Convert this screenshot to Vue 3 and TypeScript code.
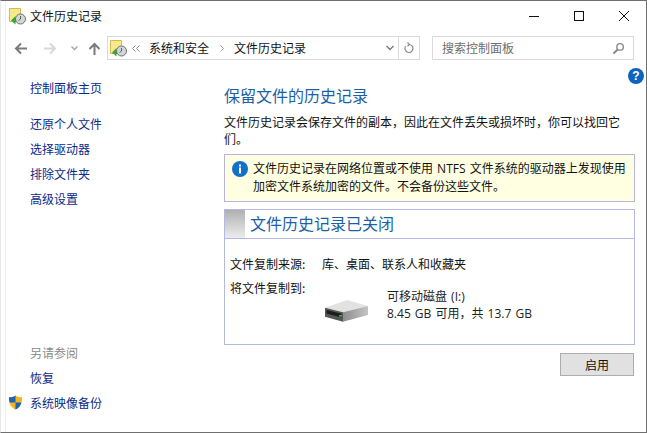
<script setup lang="ts">
const links = ["还原个人文件", "选择驱动器", "排除文件夹", "高级设置"];
</script>

<template>
  <div class="window">
    <header class="titlebar">
      <svg class="app-icon" viewBox="0 0 17 17">
        <path d="M0.5 0.5 H11.5 V13.5 H0.5 Z" fill="#fae98c" stroke="#d8b94c" />
        <path d="M2 12.5 L6.5 8 V10.5 H9 V14 H6.5 V16.5 Z" fill="#3aa535" />
        <circle cx="11.5" cy="11" r="5" fill="#d3d6d6" stroke="#6c7272" />
        <path d="M11.5 8 V11 L9.5 12.5" fill="none" stroke="#444" stroke-width="0.8" />
      </svg>
      <span class="title">文件历史记录</span>
      <div class="controls">
        <svg viewBox="0 0 10 10"><path d="M0 5.5 H10" stroke="#111" fill="none" /></svg>
        <svg viewBox="0 0 10 10"><rect x="0.5" y="0.5" width="9" height="9" stroke="#111" fill="none" /></svg>
        <svg viewBox="0 0 10 10"><path d="M0 0 L10 10 M10 0 L0 10" stroke="#111" fill="none" /></svg>
      </div>
    </header>

    <nav class="toolbar">
      <div class="arrows">
        <svg viewBox="0 0 13 13"><path d="M13 6.5 H2 M7 1.5 L2 6.5 L7 11.5" stroke="#7a7a7a" stroke-width="2" fill="none" /></svg>
        <svg class="fwd" viewBox="0 0 13 13"><path d="M0 6.5 H11 M6 1.5 L11 6.5 L6 11.5" stroke="#d8d8d8" stroke-width="2" fill="none" /></svg>
        <svg class="chev" viewBox="0 0 7 5"><path d="M0.5 0.5 L3.5 3.5 L6.5 0.5" stroke="#a5a5a5" stroke-width="1.4" fill="none" /></svg>
        <svg class="up" viewBox="0 0 13 13"><path d="M6.5 13 V2 M1.5 7 L6.5 2 L11.5 7" stroke="#7a7a7a" stroke-width="2" fill="none" /></svg>
      </div>
      <div class="address">
        <svg class="app-icon" viewBox="0 0 17 17">
          <path d="M0.5 0.5 H11.5 V13.5 H0.5 Z" fill="#fae98c" stroke="#d8b94c" />
          <path d="M2 12.5 L6.5 8 V10.5 H9 V14 H6.5 V16.5 Z" fill="#3aa535" />
          <circle cx="11.5" cy="11" r="5" fill="#d3d6d6" stroke="#6c7272" />
          <path d="M11.5 8 V11 L9.5 12.5" fill="none" stroke="#444" stroke-width="0.8" />
        </svg>
        <svg class="more" viewBox="0 0 8 7"><path d="M3.5 0.5 L0.5 3.5 L3.5 6.5 M7.5 0.5 L4.5 3.5 L7.5 6.5" stroke="#8a8a8a" fill="none" /></svg>
        <span class="crumb">系统和安全</span>
        <svg class="sep" viewBox="0 0 4 7"><path d="M0.5 0.5 L3.5 3.5 L0.5 6.5" stroke="#a0a0a0" fill="none" /></svg>
        <span class="crumb">文件历史记录</span>
        <span class="grow"></span>
        <span class="drop"><svg viewBox="0 0 8 6"><path d="M0.5 1 L4 4.5 L7.5 1" stroke="#777" stroke-width="1.3" fill="none" /></svg></span>
        <span class="refresh">
          <svg viewBox="0 0 10 12"><path d="M5 2.5 A4 4 0 1 1 1.6 4.4 M3.5 0.5 L5.5 2.5 L3.5 4.3" stroke="#8a8a8a" stroke-width="1.2" fill="none" /></svg>
        </span>
      </div>
      <div class="search">
        <span>搜索控制面板</span>
        <svg viewBox="0 0 14 14"><circle cx="8.7" cy="5.3" r="3.5" stroke="#8a8a8a" stroke-width="1.5" fill="none" /><path d="M6 8 L1.5 12.5" stroke="#8a8a8a" stroke-width="2.2" /></svg>
      </div>
    </nav>

    <div class="help">?</div>

    <div class="body">
      <aside class="side">
        <a class="link home">控制面板主页</a>
        <a v-for="l in links" :key="l" class="link">{{ l }}</a>
        <div class="see-also">
          <div class="muted">另请参阅</div>
          <a class="link">恢复</a>
          <a class="link with-icon">
            <svg class="shield" viewBox="0 0 16 16">
              <path d="M8 0.5 C10 2 12.5 2.5 15 2.5 C15.3 9 13 13.5 8 15.5 C3 13.5 0.7 9 1 2.5 C3.5 2.5 6 2 8 0.5 Z" fill="#f3b51e" />
              <path d="M8 0.5 C6 2 3.5 2.5 1 2.5 C1 4.5 1.2 6.5 1.8 8 H8 Z M8 8 V15.5 C11 14.3 13.2 11.8 14.3 8 Z" fill="#1c63b8" />
            </svg>
            系统映像备份
          </a>
        </div>
      </aside>

      <main class="content">
        <h1 class="heading">保留文件的历史记录</h1>
        <p class="intro">文件历史记录会保存文件的副本，因此在文件丢失或损坏时，你可以找回它们。</p>
        <div class="notice">
          <svg class="info" viewBox="0 0 16 16">
            <circle cx="8" cy="8" r="8" fill="#1170c9" />
            <rect x="7" y="6.5" width="2" height="6" fill="#fff" />
            <rect x="7" y="3.5" width="2" height="2" fill="#fff" />
          </svg>
          <p>文件历史记录在网络位置或不使用 NTFS 文件系统的驱动器上发现使用加密文件系统加密的文件。不会备份这些文件。</p>
        </div>
        <section class="panel">
          <div class="panel-head">
            <span class="swatch"></span>
            <h2>文件历史记录已关闭</h2>
          </div>
          <div class="panel-body">
            <div class="row">
              <span class="label">文件复制来源:</span>
              <span>库、桌面、联系人和收藏夹</span>
            </div>
            <div class="row target">
              <span class="label">将文件复制到:</span>
              <div class="drive">
                <svg class="disk" viewBox="0 0 43 22">
                  <defs>
                    <linearGradient id="side" x1="0" x2="1" y1="0" y2="0">
                      <stop offset="0" stop-color="#8d8d8d" />
                      <stop offset="1" stop-color="#c4c4c4" />
                    </linearGradient>
                  </defs>
                  <path d="M0 7.7 L22 0 L43 6 L18 12.3 Z" fill="#e2e2e2" />
                  <path d="M18 12.3 L43 6 V15 L18 21.7 Z" fill="url(#side)" />
                  <path d="M0 7.7 L18 12.3 V21.7 L0 16.7 Z" fill="#565656" />
                  <path d="M1.5 10 L16.5 13.8 V17.5 L1.5 13.5 Z" fill="#1d1d1d" />
                  <rect x="14" y="15" width="3" height="1.6" fill="#22c43c" />
                </svg>
                <div class="drive-text">
                  <div>可移动磁盘 (I:)</div>
                  <div>8.45 GB 可用，共 13.7 GB</div>
                </div>
              </div>
            </div>
          </div>
        </section>
        <div class="actions">
          <button class="enable">启用</button>
        </div>
      </main>
    </div>
  </div>
</template>

<style>
html,
body {
  margin: 0;
  background: #fff;
}
</style>

<style scoped>
.window {
  box-sizing: border-box;
  width: 647px;
  height: 433px;
  background: #fff;
  border-top: 1px solid #6f6f6f;
  border-right: 1px solid #6f6f6f;
  border-bottom: 1px solid #6f6f6f;
  border-left: 1px solid #e8e8e8;
  display: flex;
  flex-direction: column;
  font: 12px/16px "Noto Sans CJK SC", "Liberation Sans", sans-serif;
  color: #111;
  position: relative;
  overflow: hidden;
}

/* faint seam left of the window content */
.window::before {
  content: "";
  position: absolute;
  left: 4px;
  top: 0;
  bottom: 0;
  width: 1px;
  background: #eeeeee;
}

.titlebar {
  height: 30px;
  display: flex;
  align-items: center;
  padding-left: 8px;
}

.app-icon {
  width: 17px;
  height: 17px;
  flex: none;
}

.title {
  margin-left: 4px;
}

.controls {
  margin-left: auto;
  display: flex;
  align-items: center;
  margin-right: 17px;
  gap: 35px;
}

.controls svg {
  width: 10px;
  height: 10px;
}

.toolbar {
  height: 24px;
  margin-top: 5px;
  display: flex;
  align-items: center;
  padding-left: 13px;
}

.arrows {
  display: flex;
  align-items: center;
  width: 93px;
  flex: none;
}

.arrows svg {
  width: 13px;
  height: 13px;
  flex: none;
}

.arrows .fwd {
  margin-left: 17px;
}

.arrows .chev {
  width: 7px;
  height: 5px;
  margin-left: 14px;
}

.arrows .up {
  margin-left: 10px;
}

.address {
  box-sizing: border-box;
  width: 313px;
  height: 24px;
  border: 1px solid #d9d9d9;
  display: flex;
  align-items: center;
  padding-left: 2px;
  flex: none;
}

.more {
  width: 8px;
  height: 7px;
  margin: 0 9px 0 5px;
}

.crumb {
  margin-right: 11px;
}

.sep {
  width: 4px;
  height: 7px;
  margin-right: 10px;
}

.grow {
  flex: 1;
}

.drop {
  width: 17px;
  display: flex;
  justify-content: center;
}

.drop svg {
  width: 8px;
  height: 6px;
}

.refresh {
  width: 20px;
  height: 22px;
  border-left: 1px solid #d9d9d9;
  display: flex;
  align-items: center;
  justify-content: center;
}

.refresh svg {
  width: 10px;
  height: 12px;
}

.search {
  box-sizing: border-box;
  width: 202px;
  height: 24px;
  margin-left: 12px;
  border: 1px solid #d9d9d9;
  display: flex;
  align-items: center;
  justify-content: space-between;
  padding: 0 8px 0 9px;
  color: #6d6d6d;
}

.search svg {
  width: 13px;
  height: 13px;
}

.help {
  position: absolute;
  top: 67px;
  right: 2px;
  width: 16px;
  height: 16px;
  border-radius: 50%;
  background: #0d64bd;
  color: #fff;
  font: bold 12px/16px "Liberation Sans", sans-serif;
  text-align: center;
}

.body {
  flex: 1;
  display: flex;
  min-height: 0;
}

.side {
  width: 223px;
  flex: none;
  padding: 20px 0 21px 29px;
  box-sizing: border-box;
  display: flex;
  flex-direction: column;
}

.link {
  display: block;
  color: #0a2a8a;
  line-height: 16px;
  margin-bottom: 9px;
}

.home {
  margin-bottom: 20px;
}

.see-also {
  margin-top: auto;
}

.muted {
  color: #8a8a8a;
  margin-bottom: 9px;
}

.with-icon {
  position: relative;
  margin-bottom: 0;
}

.shield {
  position: absolute;
  left: -22px;
  top: -1px;
  width: 15px;
  height: 17px;
}

.content {
  width: 411px;
  flex: none;
  display: flex;
  flex-direction: column;
}

.heading {
  margin: 24px 0 0;
  font-size: 16px;
  font-weight: 400;
  line-height: 22px;
  color: #1a5fa8;
}

.intro {
  margin: 7px 0 0;
  line-height: 17px;
}

.notice {
  box-sizing: border-box;
  height: 48px;
  margin-top: 7px;
  border: 1px solid #b4b4de;
  background: #ffffe1;
  display: flex;
  align-items: center;
  padding: 0 6px 0 7px;
  gap: 5px;
}

.notice p {
  margin: 0;
  line-height: 18px;
  color: #111;
  word-spacing: 1px;
  font-family: "Open Sans", "Noto Sans CJK SC", sans-serif;
}

.info {
  width: 16px;
  height: 16px;
  flex: none;
  align-self: flex-start;
  margin-top: 6px;
}

.panel {
  box-sizing: border-box;
  height: 136px;
  margin-top: 7px;
  border: 1px solid #b4b8e0;
  display: flex;
  flex-direction: column;
}

.panel-head {
  height: 28px;
  flex: none;
  border-bottom: 1px solid #b4b8e0;
  display: flex;
  align-items: center;
}

.swatch {
  width: 20px;
  height: 100%;
  background: linear-gradient(#b0b0b0, #ececec);
}

.panel-head h2 {
  margin: -2px 0 0 5px;
  font-size: 16px;
  font-weight: 400;
  line-height: 22px;
  color: #1a5fa8;
}

.panel-body {
  padding: 17px 5px 0;
}

.row {
  display: flex;
  line-height: 16px;
}

.label {
  width: 92px;
  flex: none;
}

.target {
  margin-top: 8px;
}

.drive {
  display: flex;
  align-items: flex-end;
}

.disk {
  width: 43px;
  height: 22px;
  margin: 0 19px 0 3px;
}

.drive-text {
  margin-top: 8px;
  line-height: 17px;
  color: #222;
  word-spacing: 1px;
  font-family: "Open Sans", "Noto Sans CJK SC", sans-serif;
}

.actions {
  display: flex;
  justify-content: flex-end;
  margin-top: 8px;
  padding-right: 1px;
}

.enable {
  box-sizing: border-box;
  width: 74px;
  height: 23px;
  background: #e1e1e1;
  border: 1px solid #adadad;
  font: inherit;
  color: #111;
  padding: 0;
}
</style>
